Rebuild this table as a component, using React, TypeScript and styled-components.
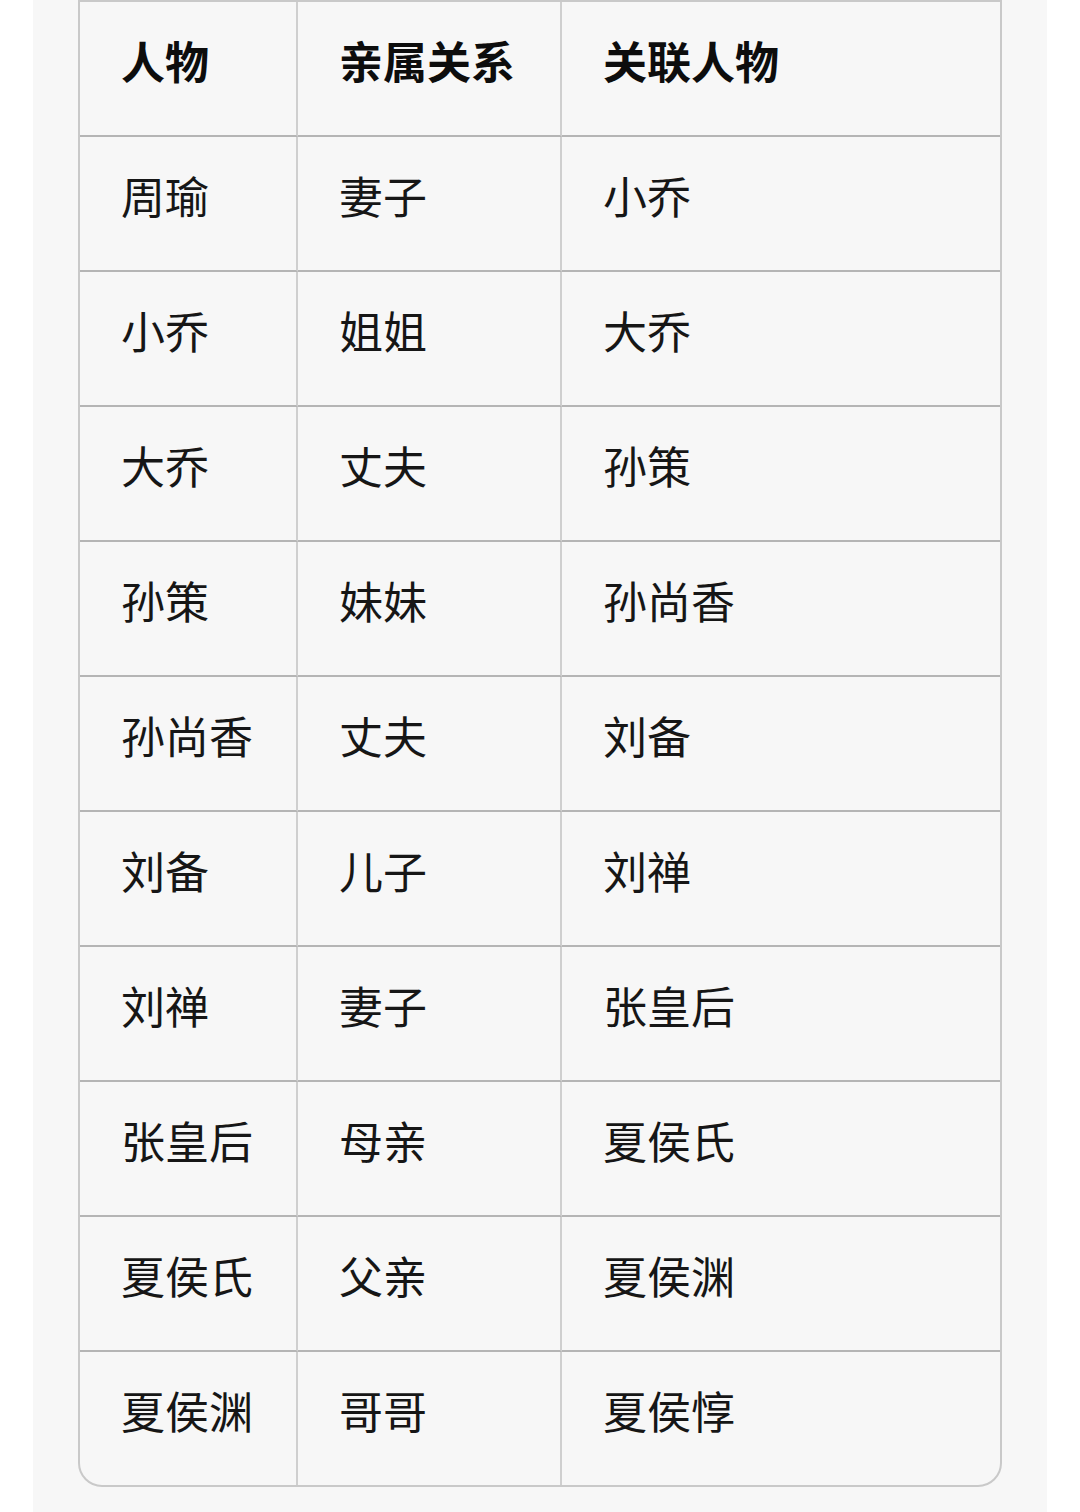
import React from "react";
import styled, { createGlobalStyle } from "styled-components";

const GlobalStyle = createGlobalStyle`
  html, body {
    margin: 0;
    padding: 0;
    background: #ffffff;
  }
  body {
    font-family: "Noto Sans CJK SC", "Noto Sans", sans-serif;
  }
`;

const rows: [string, string, string][] = [
  ["周瑜", "妻子", "小乔"],
  ["小乔", "姐姐", "大乔"],
  ["大乔", "丈夫", "孙策"],
  ["孙策", "妹妹", "孙尚香"],
  ["孙尚香", "丈夫", "刘备"],
  ["刘备", "儿子", "刘禅"],
  ["刘禅", "妻子", "张皇后"],
  ["张皇后", "母亲", "夏侯氏"],
  ["夏侯氏", "父亲", "夏侯渊"],
  ["夏侯渊", "哥哥", "夏侯惇"],
];

const headers = ["人物", "亲属关系", "关联人物"];

const App = () => {
  return (
    <>
      <GlobalStyle />
      <Page>
        <Panel>
          <Table>
            {headers.map((h, i) => (
              <Cell key={h} $head $last={i === 2}>
                {h}
              </Cell>
            ))}
            {rows.map((row, r) =>
              row.map((text, c) => (
                <Cell
                  key={`${r}-${c}`}
                  $last={c === 2}
                  $bottom={r === rows.length - 1}
                >
                  {text}
                </Cell>
              ))
            )}
          </Table>
        </Panel>
      </Page>
    </>
  );
};

export default App;

const Page = styled.div`
  padding: 0 33px;
  min-height: 1512px;
  box-sizing: border-box;
`;

const Panel = styled.div`
  background: #f7f7f7;
  min-height: 1512px;
  padding: 0 45px 25px;
  box-sizing: border-box;
`;

const Table = styled.div`
  display: grid;
  grid-template-columns: 218px 264px 1fr;
  border: 2px solid #c9c9c9;
  border-radius: 0 0 24px 24px;
  overflow: hidden;
  background: #f7f7f7;
`;

const Cell = styled.div<{ $head?: boolean; $last?: boolean; $bottom?: boolean }>`
  display: flex;
  align-items: center;
  box-sizing: content-box;
  height: 115px;
  padding: 0 0 18px 41px;
  border-right: ${(p) => (p.$last ? "none" : "2px solid #cfcfcf")};
  border-bottom: ${(p) => (p.$bottom ? "none" : "2px solid #b5b5b5")};
  font-size: 44px;
  line-height: 1;
  font-weight: ${(p) => (p.$head ? 700 : 400)};
  color: ${(p) => (p.$head ? "#0d0d0d" : "#161616")};
  white-space: nowrap;
`;
